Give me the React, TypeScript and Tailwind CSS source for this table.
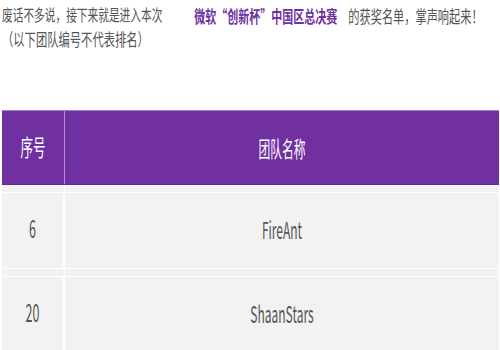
const rows = [
  { no: "6", name: "FireAnt" },
  { no: "20", name: "ShaanStars" },
];

const font = { fontFamily: '"Noto Sans CJK SC", "Noto Sans", sans-serif' };

export default function App() {
  return (
    <div className="w-[500px] h-[350px] overflow-hidden bg-white" style={font}>
      <div className="pl-[2px] pt-[4px] text-[#555555]">
        <div className="h-[22px] flex items-center whitespace-nowrap text-[10.7px] scale-y-[1.5]">
          <span>废话不多说，接下来就是进入本次</span>
          <span className="ml-[32px] font-bold text-[#7030a0] text-[11px]">微软“创新杯”中国区总决赛</span>
          <span className="ml-[11px] text-[11.2px]">的获奖名单，掌声响起来！</span>
        </div>
        <div className="h-[24px] flex items-center whitespace-nowrap text-[11.3px] scale-y-[1.5]">
          （以下团队编号不代表排名）
        </div>
      </div>

      <div className="mt-[60px] ml-[2px] w-[497px]">
        {/* header */}
        <div className="grid grid-cols-[63px_1fr] h-[75px] bg-[#7030a0] border-t border-t-[#a77ccc] border-b border-b-[#6226a0] text-white">
          <div className="flex items-center justify-center border-r border-r-[#b48dd4]">
            <span className="text-[12.5px] scale-y-[1.8]">序号</span>
          </div>
          <div className="flex items-center justify-center">
            <span className="text-[11.8px] scale-y-[1.8]">团队名称</span>
          </div>
        </div>

        {rows.map((r) => (
          <div key={r.no}>
            <div className="grid grid-cols-[63px_1fr] h-[8px] bg-[#f2f2f2] border-b border-b-white">
              <div className="border-r border-r-white" />
              <div />
            </div>
            <div className="grid grid-cols-[63px_1fr] h-[76px] bg-[#f2f2f2] border-b border-b-white text-[#555555]">
              <div className="flex items-center justify-center border-r-2 border-r-white pb-[3px]">
                <span className="text-[12.5px] scale-y-[1.95]">{r.no}</span>
              </div>
              <div className="flex items-center justify-center pb-[3px]">
                <span className="text-[12px] scale-y-[1.95]">{r.name}</span>
              </div>
            </div>
          </div>
        ))}
      </div>
    </div>
  );
}
